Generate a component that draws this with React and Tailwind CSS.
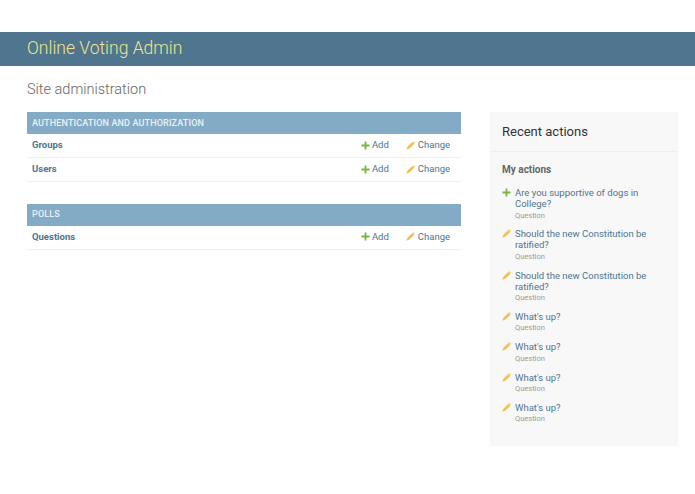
const font = { fontFamily: 'Roboto, "Liberation Sans", sans-serif' }

function Pencil({ className = '' }) {
  return (
    <svg viewBox="0 0 10 10" className={className}>
      <path d="M7 1 L9.2 3.2 L3.4 8.6 L0.4 9.6 L1.4 6.6 Z" fill="#efc050" />
      <path d="M7.4 0.6 L8 0.2 L9.8 2 L9.4 2.8 Z" fill="#e3a93c" />
    </svg>
  )
}

function AddIcon({ className = '' }) {
  return (
    <svg viewBox="0 0 10 10" className={className}>
      <path d="M4 0.5 H6 V4 H9.5 V6 H6 V9.5 H4 V6 H0.5 V4 H4 Z" fill="#7bb542" />
    </svg>
  )
}

function ModelRow({ name }) {
  return (
    <div className="flex h-[24px] items-center border-b border-[#f0f0f0] pb-[1px] pl-[5px] pr-[11px] text-[9.5px] leading-none">
      <span className="flex-1 font-bold text-[#4f7590]">{name}</span>
      <span className="flex items-center gap-[2px] text-[#4f7590]">
        <AddIcon className="h-[9px] w-[9px]" />
        Add
      </span>
      <span className="ml-[17px] flex items-center gap-[3px] text-[#4f7590]">
        <Pencil className="h-[9px] w-[9px]" />
        Change
      </span>
    </div>
  )
}

function AppModule({ title, models }) {
  return (
    <section className="mb-[21.5px]">
      <div className="flex h-[22px] items-center bg-[#83abc6] px-[5px] pt-[1px] text-[9px] font-medium tracking-[0.15px] text-[#eaf1f6]">
        {title}
      </div>
      {models.map((m) => (
        <ModelRow key={m} name={m} />
      ))}
    </section>
  )
}

const actions = [
  { kind: 'add', text: 'Are you supportive of dogs in College?' },
  { kind: 'change', text: 'Should the new Constitution be ratified?' },
  { kind: 'change', text: 'Should the new Constitution be ratified?' },
  { kind: 'change', text: "What's up?" },
  { kind: 'change', text: "What's up?" },
  { kind: 'change', text: "What's up?" },
  { kind: 'change', text: "What's up?" },
]

export default function App() {
  return (
    <div className="h-[494px] w-[695px] overflow-hidden bg-white pt-[32px]" style={font}>
      <header className="flex h-[34px] items-center bg-[#4f758f] pb-[1px] pl-[27px] text-[17.5px] font-light text-[#f0e68c]">
        Online Voting Admin
      </header>
      <div className="pl-[27px] pr-[17px]">
        <h1 className="mt-[15px] h-[18px] text-[14.5px] font-light leading-[18px] text-[#666666]">
          Site administration
        </h1>
        <div className="mt-[13px] flex items-start">
          <main className="w-[434px]">
            <AppModule title="AUTHENTICATION AND AUTHORIZATION" models={['Groups', 'Users']} />
            <AppModule title="POLLS" models={['Questions']} />
          </main>
          <aside className="ml-[29px] h-[334px] w-[188px] bg-[#f8f8f8]">
            <h2 className="flex h-[40px] items-center border-b border-[#eeeeee] pl-[12px] text-[13px] text-[#333333]">
              Recent actions
            </h2>
            <h3 className="mt-[12px] pl-[12px] text-[10px] font-bold leading-[12px] text-[#666666]">My actions</h3>
            <ul className="mt-[11px] pl-[12px] pr-[24px]">
              {actions.map((a, i) => (
                <li key={i} className="mb-[8.83px] flex">
                  {a.kind === 'add' ? (
                    <AddIcon className="mt-[1px] h-[9px] w-[9px] shrink-0" />
                  ) : (
                    <Pencil className="mt-[1px] h-[9px] w-[9px] shrink-0" />
                  )}
                  <div className="ml-[4px]">
                    <div className="text-[9.5px] leading-[11px] text-[#4f7590]">{a.text}</div>
                    <div className="mt-[1.5px] text-[7.5px] leading-[9px] text-[#999999]">Question</div>
                  </div>
                </li>
              ))}
            </ul>
          </aside>
        </div>
      </div>
    </div>
  )
}
